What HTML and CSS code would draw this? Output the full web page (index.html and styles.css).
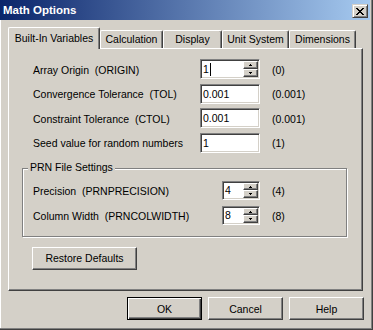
FILE: index.html
```html
<!DOCTYPE html>
<html>
<head>
<meta charset="utf-8">
<link rel="stylesheet" href="styles.css">
</head>
<body>
<div class="window">
  <div class="titlebar">
    <span class="title">Math Options</span>
    <span class="close"><svg width="8" height="7" viewBox="0 0 8 7" shape-rendering="crispEdges"><g fill="#000"><rect x="0" y="0" width="2" height="1"/><rect x="6" y="0" width="2" height="1"/><rect x="1" y="1" width="2" height="1"/><rect x="5" y="1" width="2" height="1"/><rect x="2" y="2" width="4" height="1"/><rect x="3" y="3" width="2" height="1"/><rect x="2" y="4" width="4" height="1"/><rect x="1" y="5" width="2" height="1"/><rect x="5" y="5" width="2" height="1"/><rect x="0" y="6" width="2" height="1"/><rect x="6" y="6" width="2" height="1"/></g></svg></span>
  </div>
  <div class="tabs">
    <div class="tab tab-sel tab-builtin">Built-In Variables</div>
    <div class="tab tab-calc">Calculation</div>
    <div class="tab tab-display">Display</div>
    <div class="tab tab-unit">Unit System</div>
    <div class="tab tab-dim">Dimensions</div>
  </div>
  <div class="panel">
    <div class="rows">
      <span class="lbl">Array Origin  (ORIGIN)</span>
      <div class="edit"><span class="val">1<span class="caret"></span></span><span class="spinner"><span class="sbtn"><svg width="3" height="2" viewBox="0 0 3 2" shape-rendering="crispEdges"><rect x="1" y="0" width="1" height="1"/><rect x="0" y="1" width="3" height="1"/></svg></span><span class="sbtn"><svg width="3" height="2" viewBox="0 0 3 2" shape-rendering="crispEdges"><rect x="0" y="0" width="3" height="1"/><rect x="1" y="1" width="1" height="1"/></svg></span></span></div>
      <span class="def">(0)</span>

      <span class="lbl">Convergence Tolerance  (TOL)</span>
      <div class="edit"><span class="val">0.001</span></div>
      <span class="def">(0.001)</span>

      <span class="lbl">Constraint Tolerance  (CTOL)</span>
      <div class="edit"><span class="val">0.001</span></div>
      <span class="def">(0.001)</span>

      <span class="lbl">Seed value for random numbers</span>
      <div class="edit"><span class="val">1</span></div>
      <span class="def">(1)</span>
    </div>
    <div class="group">
      <div class="legend">PRN File Settings</div>
      <div class="grows">
        <span class="lbl">Precision  (PRNPRECISION)</span>
        <div class="edit"><span class="val">4</span><span class="spinner"><span class="sbtn"><svg width="3" height="2" viewBox="0 0 3 2" shape-rendering="crispEdges"><rect x="1" y="0" width="1" height="1"/><rect x="0" y="1" width="3" height="1"/></svg></span><span class="sbtn"><svg width="3" height="2" viewBox="0 0 3 2" shape-rendering="crispEdges"><rect x="0" y="0" width="3" height="1"/><rect x="1" y="1" width="1" height="1"/></svg></span></span></div>
        <span class="def">(4)</span>

        <span class="lbl">Column Width  (PRNCOLWIDTH)</span>
        <div class="edit"><span class="val">8</span><span class="spinner"><span class="sbtn"><svg width="3" height="2" viewBox="0 0 3 2" shape-rendering="crispEdges"><rect x="1" y="0" width="1" height="1"/><rect x="0" y="1" width="3" height="1"/></svg></span><span class="sbtn"><svg width="3" height="2" viewBox="0 0 3 2" shape-rendering="crispEdges"><rect x="0" y="0" width="3" height="1"/><rect x="1" y="1" width="1" height="1"/></svg></span></span></div>
        <span class="def">(8)</span>
      </div>
    </div>
    <button class="btn restore">Restore Defaults</button>
  </div>
  <div class="actions">
    <button class="btn act ok">OK</button>
    <button class="btn act">Cancel</button>
    <button class="btn act">Help</button>
  </div>
</div>
</body>
</html>
```

FILE: styles.css
```css
* { box-sizing: border-box; }
html, body { margin: 0; padding: 0; background: #D4D0C8; }
body {
  font-family: "Liberation Sans", Arial, sans-serif;
  font-size: 10.5px;
  color: #000;
}
.window {
  width: 373px;
  height: 330px;
  background: #D4D0C8;
  border-right: 1px solid #404040;
  border-bottom: 1px solid #404040;
  box-shadow: inset -1px -1px 0 #808080, inset 1px 0 0 #fff;
  display: flex;
  flex-direction: column;
  overflow: hidden;
}
.titlebar {
  height: 20px;
  margin-right: 2px;
  background: linear-gradient(to right, #0A246A, #A6CAF0);
  display: flex;
  align-items: flex-start;
  justify-content: space-between;
  flex-shrink: 0;
}
.title {
  color: #fff;
  font-weight: bold;
  font-size: 11.5px;
  line-height: 19px;
  padding: 1px 0 0 3px;
}
.close {
  width: 16px;
  height: 14px;
  margin: 4px 2px 0 0;
  background: #D4D0C8;
  border: 1px solid;
  border-color: #D4D0C8 #404040 #404040 #D4D0C8;
  box-shadow: inset 1px 1px 0 #fff, inset -1px -1px 0 #808080;
  display: flex;
  align-items: center;
  justify-content: center;
}
.close svg { display: block; }
.tabs {
  display: flex;
  align-items: flex-end;
  height: 21px;
  margin: 7px 0 0 8px;
  flex-shrink: 0;
}
.tab {
  height: 18px;
  border-top: 1px solid #fff;
  border-left: 1px solid #fff;
  border-right: 1px solid #404040;
  box-shadow: inset -1px 0 0 #808080;
  border-radius: 2px 2px 0 0;
  text-align: center;
  line-height: 17px;
  white-space: nowrap;
  background: #D4D0C8;
}
.tab-sel {
  height: 22px;
  margin-bottom: -1px;
  position: relative;
  z-index: 1;
  line-height: 18px;
  padding-top: 1px;
}
.tab-builtin { width: 92px; }
.tab-calc { width: 63px; }
.tab-display { width: 59px; }
.tab-unit { width: 67px; }
.tab-dim { width: 67px; }
.panel {
  margin-left: 8px;
  width: 355px;
  height: 243px;
  flex-shrink: 0;
  border-top: 1px solid #fff;
  border-left: 1px solid #fff;
  border-right: 1px solid #404040;
  border-bottom: 1px solid #404040;
  box-shadow: inset -1px -1px 0 #808080;
  padding: 10px 0 0 13px;
}
.rows {
  display: grid;
  grid-template-columns: 155px 60px auto;
  column-gap: 12px;
  row-gap: 4.67px;
  grid-auto-rows: 20px;
  align-items: center;
  margin-left: 11px;
}
.lbl { white-space: pre; padding-top: 1px; }
.def { white-space: nowrap; padding-top: 1px; }
.edit {
  height: 100%;
  background: #fff;
  border: 1px solid;
  border-color: #808080 #fff #fff #808080;
  box-shadow: inset 1px 1px 0 #404040, inset -1px -1px 0 #D4D0C8;
  padding: 1px;
  display: flex;
  align-items: stretch;
}
.val {
  flex: 1;
  padding-left: 1px;
  display: flex;
  align-items: center;
}
.caret {
  display: inline-block;
  width: 1px;
  height: 13px;
  background: #000;
  margin-left: 1px;
}
.spinner {
  width: 15px;
  display: flex;
  flex-direction: column;
}
.sbtn {
  flex: 1;
  background: #D4D0C8;
  border: 1px solid;
  border-color: #fff #404040 #404040 #fff;
  box-shadow: inset -1px -1px 0 #808080;
  display: flex;
  align-items: center;
  justify-content: center;
}
.sbtn svg { display: block; fill: #000; }
.group {
  margin-top: 15px;
  width: 325px;
  height: 69px;
  border: 1px solid #808080;
  box-shadow: inset 1px 1px 0 #fff, 1px 1px 0 #fff;
  padding: 0 0 0 10px;
}
.legend {
  margin: -8px 0 0 -5px;
  width: fit-content;
  padding: 0 2px;
  line-height: 13px;
  background: #D4D0C8;
  position: relative;
}
.grows {
  margin-top: 7px;
  display: grid;
  grid-template-columns: 177px 38px auto;
  column-gap: 12px;
  row-gap: 6px;
  grid-auto-rows: 19px;
  align-items: center;
}
.btn {
  font: inherit;
  color: #000;
  background: #D4D0C8;
  border: 1px solid;
  border-color: #fff #404040 #404040 #fff;
  box-shadow: inset -1px -1px 0 #808080;
  padding: 0;
  height: 23px;
  margin: 0;
}
.restore {
  display: block;
  width: 105px;
  margin: 10px 0 0 10px;
}
.actions {
  display: flex;
  justify-content: flex-end;
  gap: 6px;
  margin-top: 6px;
  padding-right: 8px;
}
.act { width: 75px; }
.ok {
  border: 1px solid #000;
  box-shadow: inset 1px 1px 0 #fff, inset -1px -1px 0 #404040, inset -2px -2px 0 #808080;
}
```
